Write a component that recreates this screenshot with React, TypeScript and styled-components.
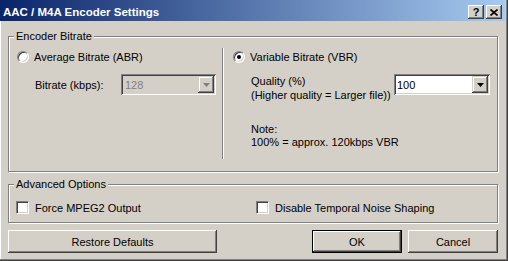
import React from 'react';
import styled, { createGlobalStyle, css } from 'styled-components';

const GlobalStyle = createGlobalStyle`
  html, body {
    margin: 0;
    padding: 0;
    background: #d4d0c8;
  }
  body {
    font-family: "Liberation Sans", Arial, sans-serif;
    font-size: 11px;
    color: #000;
  }
`;

const Window = styled.div`
  width: 508px;
  height: 261px;
  box-sizing: border-box;
  padding-right: 3px;
  background: #d4d0c8;
  display: flex;
  flex-direction: column;
  box-shadow: inset -1px -1px #404040, inset -2px -2px #808080, inset 1px 0 #fff;
`;

const TitleBar = styled.div`
  height: 21px;
  flex-shrink: 0;
  box-sizing: border-box;
  padding: 3px 3px 0 3px;
  display: flex;
  align-items: center;
  background: linear-gradient(to right, #0a246a, #a6caf0);
  color: #fff;
  font-weight: bold;
  font-size: 11.5px;
`;

const Title = styled.span`
  flex: 1;
  white-space: nowrap;
`;

const CaptionButtons = styled.div`
  display: flex;
  gap: 2px;
`;

const CaptionButton = styled.span`
  width: 16px;
  height: 14px;
  box-sizing: border-box;
  display: flex;
  align-items: center;
  justify-content: center;
  background: #d4d0c8;
  color: #000;
  font-size: 11px;
  font-weight: bold;
  box-shadow: inset -1px -1px #404040, inset 1px 1px #fff, inset -2px -2px #808080;
`;

const Body = styled.div`
  flex: 1;
  padding: 15px 0 0 8px;
  display: flex;
  flex-direction: column;
`;

const GroupBox = styled.div<{ $height: number; $gap?: number }>`
  position: relative;
  width: 490px;
  height: ${p => p.$height}px;
  margin-top: ${p => p.$gap ?? 0}px;
  box-sizing: border-box;
  border: 1px solid #808080;
  box-shadow: inset 1px 1px #fff, 1px 1px #fff;
  display: flex;
`;

const Legend = styled.span`
  position: absolute;
  top: -7px;
  left: 5px;
  padding: 0 2px;
  line-height: 13px;
  background: #d4d0c8;
  white-space: nowrap;
`;

const Column = styled.div<{ $width?: number; $pad: number }>`
  ${p => (p.$width ? `width: ${p.$width}px;` : 'flex: 1;')}
  box-sizing: border-box;
  padding: 13px 0 0 ${p => p.$pad}px;
  display: flex;
  flex-direction: column;
`;

const Separator = styled.div`
  width: 2px;
  box-sizing: border-box;
  margin: 11px 0 12px;
  border-left: 1px solid #808080;
  border-right: 1px solid #fff;
`;

const OptionRow = styled.label`
  height: 13px;
  display: flex;
  align-items: center;
  gap: 5px;
  white-space: nowrap;
`;

const RadioCircle = styled.span<{ $checked?: boolean }>`
  position: relative;
  width: 12px;
  height: 12px;
  box-sizing: border-box;
  border-radius: 50%;
  background: #fff;
  border: 1px solid;
  border-color: #808080 #fff #fff #808080;
  box-shadow: inset 1px 1px #404040, inset -1px -1px #d4d0c8;
  ${p =>
    p.$checked &&
    css`
      &::after {
        content: '';
        position: absolute;
        left: 3px;
        top: 3px;
        width: 4px;
        height: 4px;
        border-radius: 50%;
        background: #000;
      }
    `}
`;

const CheckBox = styled.span`
  width: 13px;
  height: 13px;
  box-sizing: border-box;
  background: #fff;
  border: 1px solid;
  border-color: #808080 #fff #fff #808080;
  box-shadow: inset 1px 1px #404040, inset -1px -1px #d4d0c8;
`;

const FieldRow = styled.div<{ $indent: number }>`
  margin: 11px 0 0 ${p => p.$indent}px;
  display: flex;
  align-items: flex-start;
`;

const FieldLabel = styled.div<{ $width: number; $top?: number }>`
  width: ${p => p.$width}px;
  padding-top: ${p => p.$top ?? 0}px;
  line-height: 14px;
  white-space: nowrap;
`;

const Combo = styled.div<{ $width: number; $disabled?: boolean }>`
  width: ${p => p.$width}px;
  height: 21px;
  box-sizing: border-box;
  padding: 2px;
  display: flex;
  align-items: center;
  background: ${p => (p.$disabled ? '#d4d0c8' : '#fff')};
  color: ${p => (p.$disabled ? '#808080' : '#000')};
  box-shadow: inset 1px 1px #808080, inset -1px -1px #fff, inset 2px 2px #404040,
    inset -2px -2px #d4d0c8;
`;

const ComboText = styled.span<{ $pad: number }>`
  flex: 1;
  padding-left: ${p => p.$pad}px;
`;

const DropButton = styled.span`
  width: 16px;
  height: 17px;
  box-sizing: border-box;
  display: flex;
  align-items: center;
  justify-content: center;
  background: #d4d0c8;
  box-shadow: inset -1px -1px #404040, inset 1px 1px #d4d0c8, inset -2px -2px #808080,
    inset 2px 2px #fff;
`;

const Note = styled.div`
  margin: 21px 0 0 18px;
  line-height: 13px;
`;

const CheckRow = styled.div`
  padding: 16px 0 0 7px;
  display: flex;
`;

const CheckItem = styled(OptionRow)<{ $width?: number }>`
  gap: 6px;
  ${p => p.$width && `width: ${p.$width}px;`}
`;

const ButtonRow = styled.div`
  width: 490px;
  margin-top: 7px;
  display: flex;
  gap: 6px;
`;

const PushButton = styled.button<{ $width: number; $primary?: boolean }>`
  width: ${p => p.$width}px;
  height: 23px;
  box-sizing: border-box;
  padding: 0;
  border: ${p => (p.$primary ? '1px solid #000' : 'none')};
  background: #d4d0c8;
  font: inherit;
  color: #000;
  box-shadow: inset -1px -1px #404040, inset 1px 1px #fff, inset -2px -2px #808080,
    inset 2px 2px #d4d0c8;
`;

const Spacer = styled.div`
  flex: 1;
`;

const Arrow = ({ color }: { color: string }) => (
  <svg width="7" height="4" viewBox="0 0 7 4">
    <path d="M0 0H7L3.5 4Z" fill={color} />
  </svg>
);

const CloseGlyph = () => (
  <svg width="8" height="7" viewBox="0 0 8 7">
    <path d="M0.5 0.5L7.5 6.5M7.5 0.5L0.5 6.5" stroke="#000" strokeWidth="1.6" />
  </svg>
);

const App = () => {
  return (
    <>
      <GlobalStyle />
      <Window>
        <TitleBar>
          <Title>AAC / M4A Encoder Settings</Title>
          <CaptionButtons>
            <CaptionButton>?</CaptionButton>
            <CaptionButton>
              <CloseGlyph />
            </CaptionButton>
          </CaptionButtons>
        </TitleBar>
        <Body>
          <GroupBox $height={136}>
            <Legend>Encoder Bitrate</Legend>
            <Column $width={213} $pad={8}>
              <OptionRow>
                <RadioCircle />
                Average Bitrate (ABR)
              </OptionRow>
              <FieldRow $indent={18}>
                <FieldLabel $width={86} $top={4}>Bitrate (kbps):</FieldLabel>
                <Combo $width={95} $disabled>
                  <ComboText $pad={2}>128</ComboText>
                  <DropButton>
                    <Arrow color="#808080" />
                  </DropButton>
                </Combo>
              </FieldRow>
            </Column>
            <Separator />
            <Column $pad={9}>
              <OptionRow>
                <RadioCircle $checked />
                Variable Bitrate (VBR)
              </OptionRow>
              <FieldRow $indent={18}>
                <FieldLabel $width={143}>
                  Quality (%)
                  <br />
                  (Higher quality = Larger file))
                </FieldLabel>
                <Combo $width={96}>
                  <ComboText $pad={1}>100</ComboText>
                  <DropButton>
                    <Arrow color="#000" />
                  </DropButton>
                </Combo>
              </FieldRow>
              <Note>
                Note:
                <br />
                100% = approx. 120kbps VBR
              </Note>
            </Column>
          </GroupBox>
          <GroupBox $height={39} $gap={12}>
            <Legend>Advanced Options</Legend>
            <CheckRow>
              <CheckItem $width={240}>
                <CheckBox />
                Force MPEG2 Output
              </CheckItem>
              <CheckItem>
                <CheckBox />
                Disable Temporal Noise Shaping
              </CheckItem>
            </CheckRow>
          </GroupBox>
          <ButtonRow>
            <PushButton $width={209}>Restore Defaults</PushButton>
            <Spacer />
            <PushButton $width={90} $primary>
              OK
            </PushButton>
            <PushButton $width={90}>Cancel</PushButton>
          </ButtonRow>
        </Body>
      </Window>
    </>
  );
};

export default App;
